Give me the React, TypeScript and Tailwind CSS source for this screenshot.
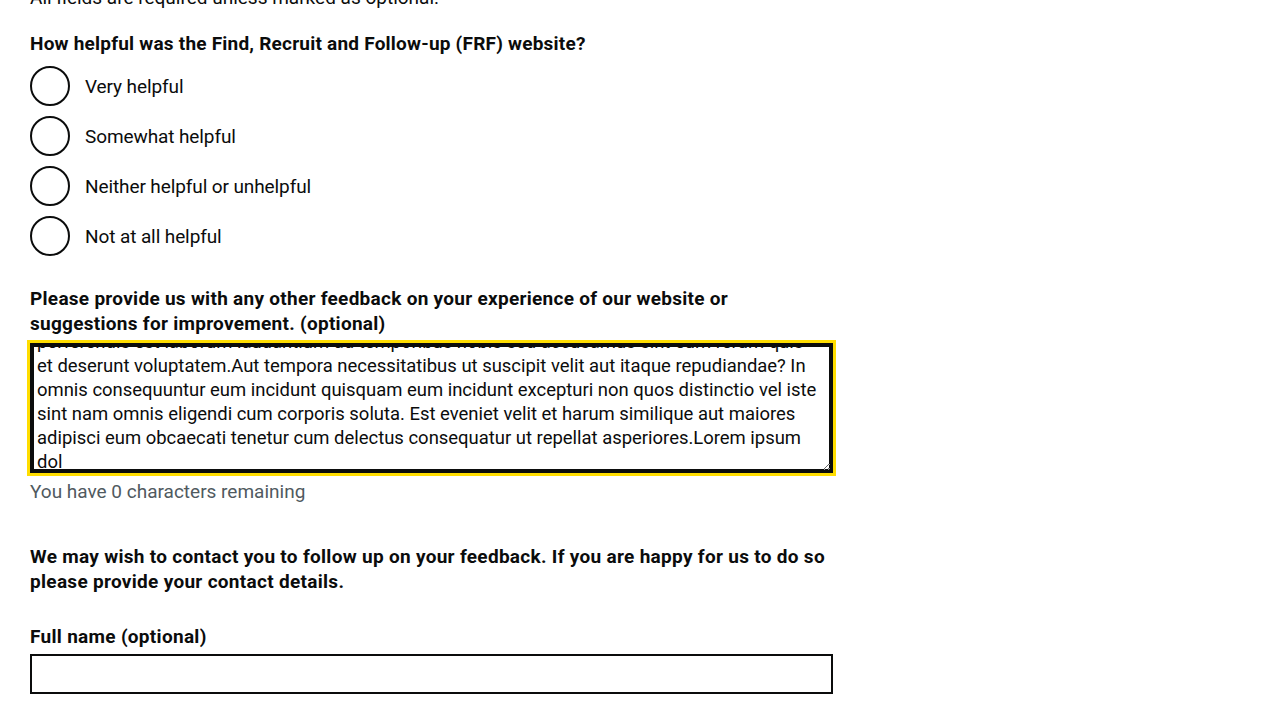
import { useEffect, useRef } from "react";

const options = [
  "Very helpful",
  "Somewhat helpful",
  "Neither helpful or unhelpful",
  "Not at all helpful",
];

const feedback = [
  "Lorem ipsum dolor sit amet. Et quia dolores est voluptas quia qui galisum nihil aut voluptas",
  "consequatur. Sed ipsa quasi non corrupti fugiat ut architecto sint eum aliquid minima eos",
  "perferendis est laborum laudantium ad temporibus nobis sed accusamus sint eum rerum quis",
  "et deserunt voluptatem.Aut tempora necessitatibus ut suscipit velit aut itaque repudiandae? In",
  "omnis consequuntur eum incidunt quisquam eum incidunt excepturi non quos distinctio vel iste",
  "sint nam omnis eligendi cum corporis soluta. Est eveniet velit et harum similique aut maiores",
  "adipisci eum obcaecati tenetur cum delectus consequatur ut repellat asperiores.Lorem ipsum",
  "dol",
].join("\n");

export default function App() {
  const area = useRef<HTMLTextAreaElement>(null);

  useEffect(() => {
    const el = area.current;
    if (el) el.scrollTop = el.scrollHeight - el.clientHeight - 8;
  }, []);

  return (
    <div className="min-h-screen overflow-hidden bg-white px-[30px] font-['Roboto',sans-serif] text-[19px] leading-[25px] text-[#0b0c0c]">
      <div className="-mt-[15px] w-[803px]">
        <p className="mb-[21px]">All fields are required unless marked as optional.</p>

        {/* Rating */}
        <fieldset className="mb-[30px]">
          <legend className="mb-[10px] font-bold tracking-[0.22px]">
            How helpful was the Find, Recruit and Follow-up (FRF) website?
          </legend>
          <div className="flex flex-col gap-[10px]">
            {options.map((opt) => (
              <label key={opt} className="flex h-10 items-center">
                <input
                  type="radio"
                  name="helpful"
                  className="m-0 h-10 w-10 shrink-0 appearance-none rounded-full border-2 border-[#0b0c0c] bg-white"
                />
                <span className="pl-[15px] tracking-[-0.1px]">{opt}</span>
              </label>
            ))}
          </div>
        </fieldset>

        {/* Feedback */}
        <div className="mb-[40px]">
          <label className="mb-[7px] block font-bold tracking-[0.28px]">
            Please provide us with any other feedback on your experience of our website or
            suggestions for improvement. (optional)
          </label>
          <textarea
            ref={area}
            wrap="off"
            defaultValue={feedback}
            className="block h-[130px] w-full overflow-hidden border-2 border-[#0b0c0c] p-[5px] text-[18.45px] leading-[24px] shadow-[inset_0_0_0_2px_#0b0c0c] outline-[3px] outline-offset-0 outline-[#ffdd00] [outline-style:solid]"
          />
          <p className="mt-[6px] text-[#505a5f]">You have 0 characters remaining</p>
        </div>

        <p className="mb-[30px] font-bold tracking-[0.3px]">
          We may wish to contact you to follow up on your feedback. If you are happy for us to do so
          please provide your contact details.
        </p>

        <div>
          <label className="mb-[5px] block font-bold tracking-[0.3px]">Full name (optional)</label>
          <input
            type="text"
            className="block h-10 w-full border-2 border-[#0b0c0c] p-[5px] text-[19px]"
          />
        </div>
      </div>
    </div>
  );
}
